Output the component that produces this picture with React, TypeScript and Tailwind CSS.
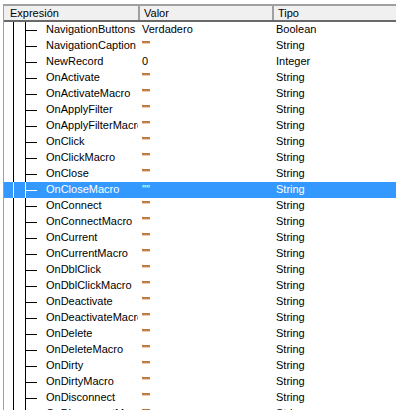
import React from 'react';

type Prop = {
  name: string;
  value: string;
  type: string;
};

const props: Prop[] = [
  { name: 'NavigationButtons', value: 'Verdadero', type: 'Boolean' },
  { name: 'NavigationCaption', value: '""', type: 'String' },
  { name: 'NewRecord', value: '0', type: 'Integer' },
  { name: 'OnActivate', value: '""', type: 'String' },
  { name: 'OnActivateMacro', value: '""', type: 'String' },
  { name: 'OnApplyFilter', value: '""', type: 'String' },
  { name: 'OnApplyFilterMacro', value: '""', type: 'String' },
  { name: 'OnClick', value: '""', type: 'String' },
  { name: 'OnClickMacro', value: '""', type: 'String' },
  { name: 'OnClose', value: '""', type: 'String' },
  { name: 'OnCloseMacro', value: '""', type: 'String' },
  { name: 'OnConnect', value: '""', type: 'String' },
  { name: 'OnConnectMacro', value: '""', type: 'String' },
  { name: 'OnCurrent', value: '""', type: 'String' },
  { name: 'OnCurrentMacro', value: '""', type: 'String' },
  { name: 'OnDblClick', value: '""', type: 'String' },
  { name: 'OnDblClickMacro', value: '""', type: 'String' },
  { name: 'OnDeactivate', value: '""', type: 'String' },
  { name: 'OnDeactivateMacro', value: '""', type: 'String' },
  { name: 'OnDelete', value: '""', type: 'String' },
  { name: 'OnDeleteMacro', value: '""', type: 'String' },
  { name: 'OnDirty', value: '""', type: 'String' },
  { name: 'OnDirtyMacro', value: '""', type: 'String' },
  { name: 'OnDisconnect', value: '""', type: 'String' },
  { name: 'OnDisconnectMacro', value: '""', type: 'String' },
];

const SELECTED = 'OnCloseMacro';

// tree guide: two vertical rails and the branch into the item
const TreeLines: React.FC = () => (
  <svg width="42" height="16" className="shrink-0" shapeRendering="crispEdges">
    <line x1="9.5" y1="0" x2="9.5" y2="16" stroke="currentColor" />
    <line x1="21.5" y1="0" x2="21.5" y2="16" stroke="currentColor" />
    <line x1="22" y1="8.5" x2="33" y2="8.5" stroke="currentColor" />
  </svg>
);

const Row: React.FC<{ item: Prop }> = ({ item }) => {
  const selected = item.name === SELECTED;
  return (
    <div className={`flex h-4 leading-[14px] ${selected ? 'bg-[#3399ff] text-white' : 'text-black'}`}>
      <div className="flex w-[134px] shrink-0 overflow-hidden">
        <TreeLines />
        <span className="whitespace-nowrap">{item.name}</span>
      </div>
      <div className="w-[134px] shrink-0 overflow-hidden whitespace-nowrap pl-[4px]">{item.value}</div>
      <div className="flex-1 whitespace-nowrap pl-[4px]">{item.type}</div>
    </div>
  );
};

const App: React.FC = () => {
  return (
    <div
      className="w-[396px] h-[410px] overflow-hidden bg-white pt-[4px] pl-[3px] text-[11px]"
      style={{ fontFamily: '"Liberation Sans", Arial, sans-serif' }}
    >
      <div className="h-full border-l border-[#a0a0a0]">
        {/* Column headers */}
        <div className="flex h-[18px] border-t-2 border-b-2 border-t-[#a0a0a0] border-b-[#696969] bg-[#f0f0f0] text-black">
          <div className="w-[136px] shrink-0 border-r-2 border-[#a0a0a0] pl-[6px] leading-[15px]">Expresión</div>
          <div className="w-[134px] shrink-0 border-r-2 border-[#a0a0a0] pl-[4px] leading-[15px]">Valor</div>
          <div className="flex-1 pl-[4px] leading-[15px]">Tipo</div>
        </div>

        {/* Property rows */}
        <div>
          {props.map((p) => (
            <Row key={p.name} item={p} />
          ))}
        </div>
      </div>
    </div>
  );
};

export default App;
